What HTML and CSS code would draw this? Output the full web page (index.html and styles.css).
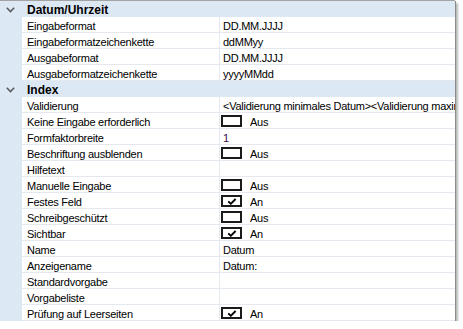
FILE: index.html
```html
<!DOCTYPE html>
<html lang="de">
<head>
<meta charset="utf-8">
<title>Eigenschaften</title>
<link rel="stylesheet" href="styles.css">
</head>
<body>
<div class="grid">
  <div class="cat">
    <div class="chev"><svg width="9" height="6" viewBox="0 0 9 6"><polyline points="0.8,0.8 4.5,4.6 8.2,0.8" fill="none" stroke="#5c5c5c" stroke-width="1.6"/></svg></div>
    <div class="cat-title">Datum/Uhrzeit</div>
  </div>
  <div class="row"><div class="gut"></div><div class="lbl">Eingabeformat</div><div class="val">DD.MM.JJJJ</div></div>
  <div class="row"><div class="gut"></div><div class="lbl">Eingabeformatzeichenkette</div><div class="val">ddMMyy</div></div>
  <div class="row"><div class="gut"></div><div class="lbl">Ausgabeformat</div><div class="val">DD.MM.JJJJ</div></div>
  <div class="row"><div class="gut"></div><div class="lbl">Ausgabeformatzeichenkette</div><div class="val">yyyyMMdd</div></div>
  <div class="cat">
    <div class="chev"><svg width="9" height="6" viewBox="0 0 9 6"><polyline points="0.8,0.8 4.5,4.6 8.2,0.8" fill="none" stroke="#5c5c5c" stroke-width="1.6"/></svg></div>
    <div class="cat-title">Index</div>
  </div>
  <div class="row"><div class="gut"></div><div class="lbl">Validierung</div><div class="val">&lt;Validierung minimales Datum&gt;&lt;Validierung maximales Datum&gt;</div></div>
  <div class="row"><div class="gut"></div><div class="lbl">Keine Eingabe erforderlich</div><div class="val"><span class="cb"></span><span>Aus</span></div></div>
  <div class="row"><div class="gut"></div><div class="lbl">Formfaktorbreite</div><div class="val num">1</div></div>
  <div class="row"><div class="gut"></div><div class="lbl">Beschriftung ausblenden</div><div class="val"><span class="cb"></span><span>Aus</span></div></div>
  <div class="row"><div class="gut"></div><div class="lbl">Hilfetext</div><div class="val"></div></div>
  <div class="row"><div class="gut"></div><div class="lbl">Manuelle Eingabe</div><div class="val"><span class="cb"></span><span>Aus</span></div></div>
  <div class="row"><div class="gut"></div><div class="lbl">Festes Feld</div><div class="val"><span class="cb"><svg width="10" height="7" viewBox="0 0 10 7"><polyline points="1.2,3.4 3.8,5.8 8.6,1" fill="none" stroke="#000" stroke-width="1.9"/></svg></span><span>An</span></div></div>
  <div class="row"><div class="gut"></div><div class="lbl">Schreibgeschützt</div><div class="val"><span class="cb"></span><span>Aus</span></div></div>
  <div class="row"><div class="gut"></div><div class="lbl">Sichtbar</div><div class="val"><span class="cb"><svg width="10" height="7" viewBox="0 0 10 7"><polyline points="1.2,3.4 3.8,5.8 8.6,1" fill="none" stroke="#000" stroke-width="1.9"/></svg></span><span>An</span></div></div>
  <div class="row"><div class="gut"></div><div class="lbl">Name</div><div class="val">Datum</div></div>
  <div class="row"><div class="gut"></div><div class="lbl">Anzeigename</div><div class="val">Datum:</div></div>
  <div class="row"><div class="gut"></div><div class="lbl">Standardvorgabe</div><div class="val"></div></div>
  <div class="row"><div class="gut"></div><div class="lbl">Vorgabeliste</div><div class="val"></div></div>
  <div class="row"><div class="gut"></div><div class="lbl">Prüfung auf Leerseiten</div><div class="val"><span class="cb"><svg width="10" height="7" viewBox="0 0 10 7"><polyline points="1.2,3.4 3.8,5.8 8.6,1" fill="none" stroke="#000" stroke-width="1.9"/></svg></span><span>An</span></div></div>
</div>
</body>
</html>
```
FILE: styles.css
```css
html, body {
  margin: 0;
  padding: 0;
  background: #ffffff;
}

body {
  font-family: "Liberation Sans", Arial, sans-serif;
  font-size: 11px;
  letter-spacing: -0.25px;
  color: #000000;
}

.grid {
  width: 455px;
  border-top: 1px solid #a3a3a3;
  background: #dde8f5;
  box-shadow: 1px 1px 0 #8c8c8c, 3px 3px 2px rgba(0, 0, 0, 0.28);
  overflow: hidden;
}

.cat {
  display: grid;
  grid-template-columns: 22px 1fr;
  height: 16px;
  background: #dde8f5;
}

.chev {
  display: flex;
  justify-content: flex-start;
  padding-left: 6px;
  padding-top: 6px;
}

.chev svg {
  display: block;
}

.cat-title {
  font-size: 12px;
  font-weight: bold;
  letter-spacing: 0;
  padding-left: 5px;
  padding-top: 3px;
  line-height: 12px;
  height: 13px;
  white-space: nowrap;
}

.row {
  display: grid;
  grid-template-columns: 22px 197px 1fr;
  height: 16px;
}

.gut {
  background: #dde8f5;
}

.lbl,
.val {
  background: #ffffff;
  border-bottom: 1px solid #e3e9ef;
  height: 12px;
  padding-top: 3px;
  line-height: 12px;
  white-space: nowrap;
  overflow: hidden;
}

.lbl {
  padding-left: 5px;
}

.val {
  border-left: 1px solid #e3e9ef;
  padding-left: 3px;
  display: flex;
  align-items: flex-start;
}

.num {
  color: #3d0b4a;
}

.cb {
  box-sizing: border-box;
  width: 21px;
  height: 12px;
  margin-top: -1px;
  margin-left: -2px;
  margin-right: 8px;
  border: 2px solid #1b1b1b;
  background: #ffffff;
  display: flex;
  align-items: center;
  justify-content: center;
  flex: none;
}

.cb svg {
  display: block;
}
```
